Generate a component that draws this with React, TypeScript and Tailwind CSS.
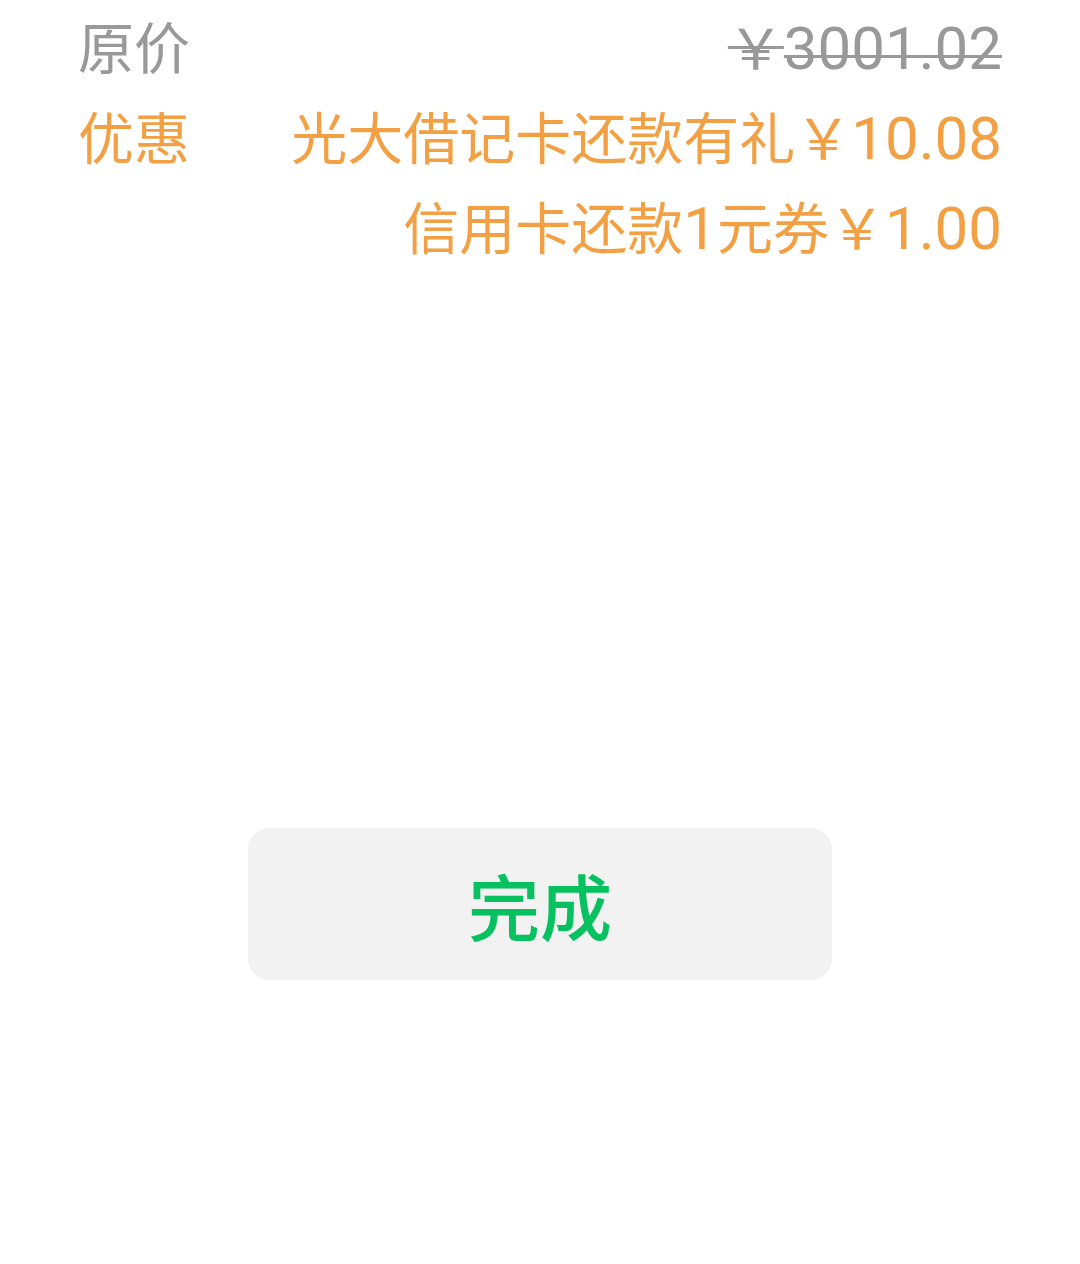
export default function App() {
  const font = { fontFamily: '"Noto Sans CJK SC", "Noto Sans", sans-serif' };
  const num = "font-['Roboto','Noto_Sans_CJK_SC',sans-serif] text-[60px] leading-none";

  return (
    <div className="w-[1080px] h-[1264px] bg-white" style={font}>
      <div className="px-[78px] text-[56px] leading-[90px]">
        <div className="flex justify-between h-[90px] text-[#999999]">
          <span>原价</span>
          <span className="line-through decoration-[3px]">
            ￥<span className={num}>3001.02</span>
          </span>
        </div>
        <div className="flex justify-between text-[#f2a043]">
          <span className="h-[90px]">优惠</span>
          <div className="flex flex-col items-end">
            <span className="h-[90px]">
              光大借记卡还款有礼￥<span className={num}>10.08</span>
            </span>
            <span className="h-[90px]">
              信用卡还款<span className={num}>1</span>元券￥<span className={num}>1.00</span>
            </span>
          </div>
        </div>
      </div>

      <div className="flex justify-center mt-[558px]">
        <button className="w-[584px] h-[152px] rounded-[22px] bg-[#f2f2f2] text-[#07c160] text-[72px] font-medium">
          完成
        </button>
      </div>
    </div>
  );
}
